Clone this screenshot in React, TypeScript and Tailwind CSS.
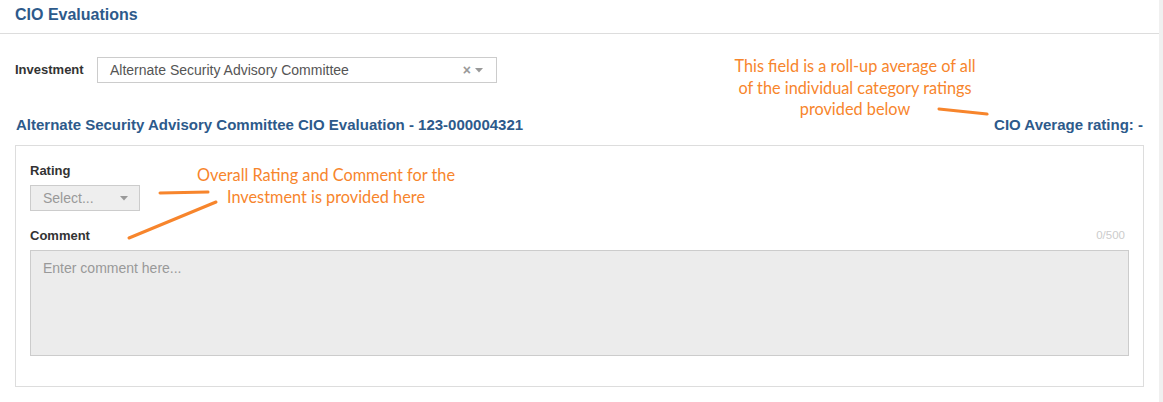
import React from "react";

const Caret = () => (
  <svg width="8" height="5" viewBox="0 0 8 5" className="block">
    <path d="M0 0 L8 0 L4 4.5 Z" fill="#999" />
  </svg>
);

export default function App() {
  return (
    <div
      className="relative flex h-[402px] w-full bg-white overflow-hidden"
      style={{ fontFamily: '"Liberation Sans", Arial, sans-serif' }}
    >
      <div className="flex-1 flex flex-col">
        {/* Header */}
        <div className="h-[34px] border-b border-[#dddddd] px-[15px] pt-[6px]">
          <h1 className="text-[16px] leading-[18px] font-bold text-[#2d5a8b]">CIO Evaluations</h1>
        </div>

        {/* Investment row */}
        <div className="mt-[23px] flex items-center pl-[15px]">
          <label className="w-[82px] text-[13px] font-bold text-[#333333]">Investment</label>
          <div className="flex h-[26px] w-[400px] items-center border border-[#cccccc] pl-[12px] pr-[13px]">
            <span className="flex-1 text-[14px] text-[#555555]">Alternate Security Advisory Committee</span>
            <span className="mr-[4px] text-[14px] font-bold leading-none text-[#999999]">×</span>
            <Caret />
          </div>
        </div>

        {/* Title row */}
        <div className="mt-[32px] flex items-center justify-between pl-[16px] pr-[16px]">
          <h2 className="text-[15px] leading-[20px] font-bold text-[#2d5a8b]">
            Alternate Security Advisory Committee CIO Evaluation - 123-000004321
          </h2>
          <div className="text-[15px] leading-[20px] font-bold text-[#2d5a8b]">CIO Average rating: -</div>
        </div>

        {/* Panel */}
        <div className="mt-[10px] ml-[15px] mr-[15px] h-[242px] border border-[#dddddd] pl-[14px] pr-[14px] pt-[17px]">
          <div className="text-[13px] leading-[16px] font-bold text-[#333333]">Rating</div>
          <div className="mt-[6px] flex h-[26px] w-[110px] items-center border border-[#cccccc] bg-[#eeeeee] pl-[12px] pr-[11px]">
            <span className="flex-1 text-[14px] text-[#999999]">Select...</span>
            <Caret />
          </div>
          <div className="mt-[16px] flex items-center justify-between">
            <span className="text-[13px] leading-[17px] font-bold text-[#333333]">Comment</span>
            <span className="pr-[4px] text-[11.5px] leading-[17px] text-[#cccccc]">0/500</span>
          </div>
          <div className="mt-[6px] h-[106px] border border-[#cccccc] bg-[#ececec] px-[12px] pt-[5px]">
            <span className="text-[14px] text-[#999999]">Enter comment here...</span>
          </div>
        </div>
      </div>
      <div className="w-[4px] bg-[#f0f0f0]" />

      {/* Annotations */}
      <div
        className="absolute left-[700px] top-[55px] w-[310px] text-center text-[16.3px] leading-[21.5px] text-[#f7852c]"
        style={{ fontFamily: 'Lato, "Open Sans", sans-serif' }}
      >
        This field is a roll-up average of all
        <br />
        of the individual category ratings
        <br />
        provided below
      </div>
      <div
        className="absolute left-[176px] top-[164px] w-[300px] text-center text-[16.3px] leading-[22px] text-[#f7852c]"
        style={{ fontFamily: 'Lato, "Open Sans", sans-serif' }}
      >
        Overall Rating and Comment for the
        <br />
        Investment is provided here
      </div>
      <svg className="pointer-events-none absolute inset-0" width="1163" height="402">
        <g stroke="#f7852c" strokeWidth="3" strokeLinecap="round" fill="none">
          <line x1="160" y1="193" x2="208" y2="192" />
          <line x1="129" y1="238" x2="216" y2="202" />
          <line x1="939" y1="109" x2="987" y2="114" />
        </g>
      </svg>
    </div>
  );
}
